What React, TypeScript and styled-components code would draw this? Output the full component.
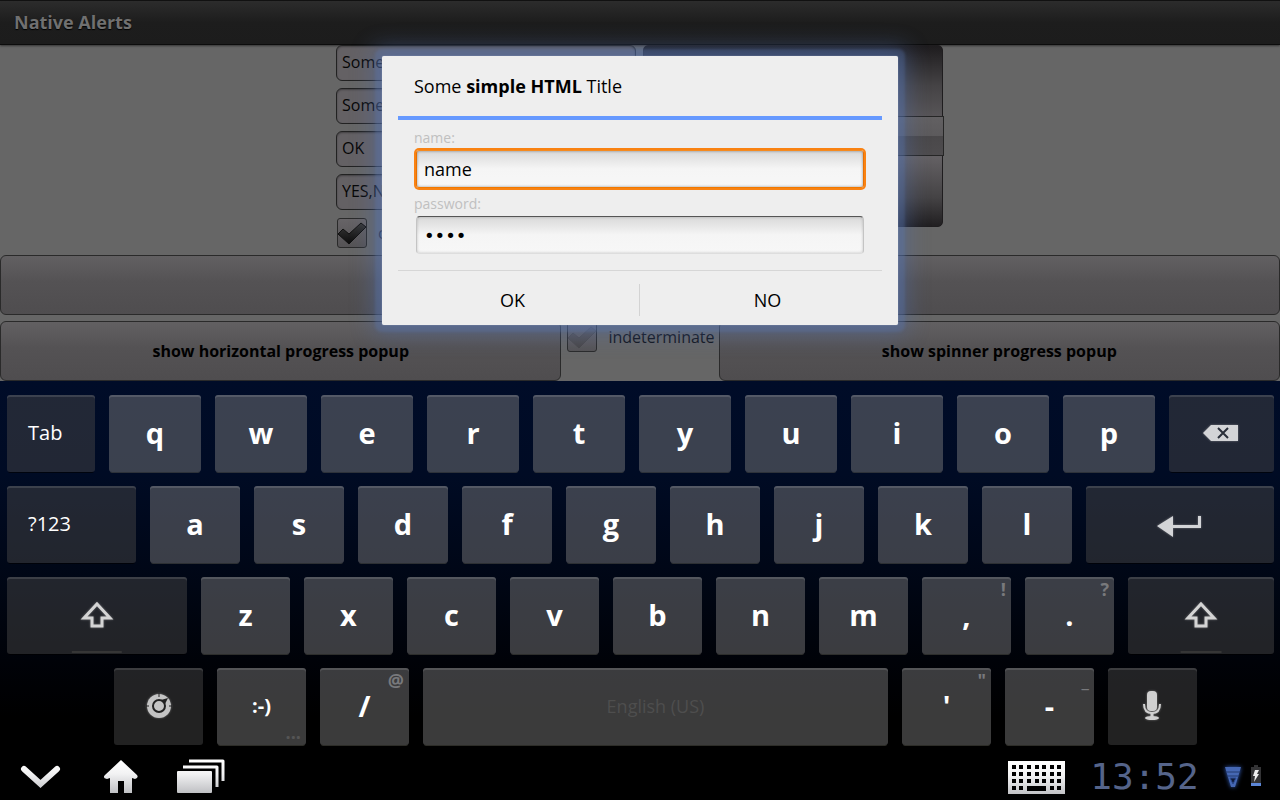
import React from "react";
import styled, { createGlobalStyle, css } from "styled-components";

const GlobalStyle = createGlobalStyle`
  *, *::before, *::after { box-sizing: border-box; }
  body {
    margin: 0;
    background: #000;
    font-family: "Open Sans", "Noto Sans", sans-serif;
  }
  button, input { font-family: inherit; margin: 0; }
  button { cursor: pointer; }
`;

const Screen = styled.div`
  display: flex;
  flex-direction: column;
  min-height: 100vh;
`;

/* ---------- application behind the dialog ---------- */

const AppArea = styled.div`
  position: relative;
  flex: 1;
  display: flex;
  flex-direction: column;
  background: #666;
`;

const TitleBar = styled.header`
  display: flex;
  align-items: center;
  height: 45px;
  padding: 0 14px 2px;
  background: linear-gradient(#2c2c2c, #1d1d1d 50%, #1c1c1c);
  border-top: 1px solid #111;
  border-bottom: 1px solid #0c0c0c;
  box-shadow: 0 1px 2px rgba(0, 0, 0, 0.5);
`;

const AppTitle = styled.h1`
  margin: 0;
  font-size: 18px;
  line-height: 24px;
  font-weight: 700;
  color: #707070;
  text-shadow: 0 1px 1px #000;
`;

const Settings = styled.form`
  display: flex;
  justify-content: center;
  gap: 7px;
  padding: 0 1px 7px 0;
`;

const FieldColumn = styled.div`
  display: flex;
  flex-direction: column;
  gap: 7px;
  width: 300px;
`;

const Field = styled.input`
  width: 100%;
  height: 36px;
  padding: 0 5px 2px;
  font-size: 16px;
  color: #060606;
  background: #646164;
  border: 1px solid #222;
  border-radius: 6px;
  box-shadow: inset 0 1px 2px rgba(0, 0, 0, 0.35);
`;

const Picker = styled.div`
  display: flex;
  flex-direction: column;
  justify-content: center;
  align-self: flex-start;
  width: 300px;
  height: 182px;
  border: 1px solid #1f1d1f;
  border-radius: 5px;
  background: linear-gradient(#1e1c1e, #454345 22%, #636063 50%, #636063 62%, #454345 84%, #211f21);
`;

const PickerBand = styled.div`
  height: 40px;
  margin-right: -2px;
  border: 1px solid #262626;
  background: linear-gradient(#626062, #5c5a5c 50%, #4a484a 51%, #4e4c4e);
`;

const CheckLabel = styled.label`
  display: flex;
  align-items: center;
  gap: 11px;
  height: 31px;
  padding: 1px 1px 0;
  font-size: 16px;
  color: #10131a;
`;

const BoxCell = styled.span`
  display: grid;
  & > * { grid-area: 1 / 1; }
`;

const Box = styled.input`
  appearance: none;
  width: 30px;
  height: 30px;
  border: 1px solid #2a2a2a;
  border-radius: 3px;
  background: linear-gradient(#676467, #555355);
`;

const Tick = styled.svg<{ $faint?: boolean }>`
  width: 30px;
  height: 30px;
  pointer-events: none;
  opacity: ${(p) => (p.$faint ? 0.2 : 1)};
`;

const Actions = styled.div`
  display: flex;
  flex-direction: column;
  gap: 6px;
`;

const ActionRow = styled.div`
  display: flex;
  align-items: flex-start;
`;

const ActionButton = styled.button`
  flex: 1;
  height: 60px;
  font-size: 16px;
  font-weight: 700;
  color: #000;
  background: linear-gradient(#626062, #545254 45%, #4f4d4f);
  border: 1px solid #2a2a2a;
  border-radius: 6px;
`;

const Middle = styled.div`
  padding: 0 3px 0 5px;
`;

/* ---------- dialog ---------- */

const Overlay = styled.div`
  position: absolute;
  inset: 0;
  display: flex;
  align-items: center;
  justify-content: center;
`;

const Dialog = styled.section`
  width: 516px;
  max-width: 100%;
  padding: 0 16px;
  background: #eee;
  border-radius: 2px;
  box-shadow:
    0 0 1px 0 rgba(190, 205, 230, 0.9),
    0 0 3px 7px rgba(90, 120, 180, 0.3),
    0 0 22px 9px rgba(80, 110, 175, 0.45);
`;

const DialogTitle = styled.h2`
  display: flex;
  align-items: center;
  height: 64px;
  margin: 0;
  padding: 0 16px;
  font-size: 18px;
  font-weight: 400;
  color: #000;
  border-bottom: 4px solid #69f;
`;

const DialogBody = styled.div`
  display: flex;
  flex-direction: column;
  gap: 8px;
  padding: 10px 16px 16px;
  border-bottom: 1px solid #d6d6d6;
`;

const Entry = styled.label`
  display: flex;
  flex-direction: column;
  gap: 4px;
  font-size: 14px;
  line-height: 16px;
  color: #c0c0c0;
`;

const EntryInput = styled.input<{ $active?: boolean }>`
  height: 38px;
  margin: 0 2px;
  padding: 0 7px;
  font-size: 18px;
  color: #000;
  border: 1px solid #c4c4c4;
  border-top-color: #555;
  border-bottom-color: #ddd;
  border-radius: 4px;
  outline: none;
  background: linear-gradient(#d9d9d9, #f5f5f5 50%, #f7f7f7);
  box-shadow: inset 0 0 3px rgba(0, 0, 0, 0.2);
  &[type="password"] { font-family: "DejaVu Sans", sans-serif; }
  ${(p) =>
    p.$active &&
    css`
      padding: 0 7px;
      border: 1px solid;
      border-color: #f58a20 #e87000 #f07800;
      border-radius: 3px;
      box-shadow: 0 0 0 2px #f98212, inset 0 0 3px rgba(0, 0, 0, 0.4);
    `}
`;

const DialogButtons = styled.div`
  display: flex;
  padding: 13px 0 9px;
`;

const DialogButton = styled.button`
  flex: 1;
  height: 32px;
  padding: 0 12px 0 0;
  font-size: 18px;
  color: #000;
  background: none;
  border: 0;
  & + & {
    padding: 0 0 0 13px;
    border-left: 1px solid #d3d3d3;
  }
`;

/* ---------- keyboard ---------- */

const Keyboard = styled.div`
  display: flex;
  flex-direction: column;
  gap: 14px;
  padding: 14px 6px 9px 7px;
  background: linear-gradient(#000c28, #000b24 25%, #000717 50%, #000208 75%, #000 90%);
`;

const KeyRow = styled.div<{ $inset?: boolean }>`
  display: flex;
  gap: 14px;
  padding: ${(p) => (p.$inset ? "0 77px 0 107px" : "0")};
`;

const KeyCap = styled.button<{ $grow: number; $fn?: boolean; $left?: boolean; $size?: number }>`
  position: relative;
  flex: ${(p) => p.$grow} 1 0;
  min-width: 0;
  height: 77px;
  display: flex;
  align-items: center;
  justify-content: ${(p) => (p.$left ? "flex-start" : "center")};
  padding: 0 0 2px;
  border: 0;
  border-radius: 3px;
  color: #fff;
  font-size: ${(p) => p.$size ?? 29}px;
  font-weight: ${(p) => (p.$fn ? 400 : 700)};
  background: ${(p) => (p.$fn ? "rgba(72, 72, 72, 0.47)" : "rgba(131, 131, 131, 0.45)")};
  box-shadow:
    inset 0 2px 0 ${(p) => (p.$fn ? "rgba(255, 255, 255, 0.12)" : "rgba(255, 255, 255, 0.13)")},
    0 2px 0 -1px ${(p) => (p.$fn ? "rgba(0, 0, 0, 0.6)" : "rgba(90, 90, 80, 0.5)")};
`;

const Legend = styled.span`
  margin-left: 21px;
`;

const SpaceLabel = styled.span`
  font-size: 18px;
  font-weight: 400;
  color: #4e4e4e;
`;

const Hint = styled.span<{ $bottom?: boolean }>`
  position: absolute;
  right: 5px;
  ${(p) => (p.$bottom ? "bottom: 2px;" : "top: 1px;")}
  font-size: 18px;
  line-height: 22px;
  font-weight: 700;
  color: ${(p) => (p.$bottom ? "#555" : "#78797c")};
`;

const ShiftLight = styled.span`
  position: absolute;
  bottom: 1px;
  left: 50%;
  width: 28%;
  height: 2px;
  transform: translateX(-50%);
  background: #363636;
`;

const Glyph = styled.svg`
  display: block;
  overflow: visible;
  filter: drop-shadow(0 0 1px rgba(255, 255, 255, 0.35));
`;

/* ---------- system bar ---------- */

const SystemBar = styled.footer`
  display: flex;
  align-items: center;
  justify-content: space-between;
  height: 46px;
  padding: 0 16px 0 20px;
  background: #000;
`;

const NavGroup = styled.nav`
  display: flex;
  align-items: center;
  gap: 40px;
`;

const NavButton = styled.button`
  display: flex;
  padding: 0;
  background: none;
  border: 0;
`;

const Status = styled.div`
  display: flex;
  align-items: center;
  gap: 12px;
`;

const Clock = styled.time`
  width: 135px;
  text-align: center;
  font-family: "DejaVu Sans Mono", monospace;
  font-size: 36px;
  line-height: 40px;
  font-weight: 400;
  color: #55648a;
`;

const ShiftIcon = () => (
  <Glyph width="34" height="28" viewBox="0 0 34 28" aria-hidden="true">
    <path d="M17 3 L30 17 H22 V25 H12 V17 H4 Z" fill="none" stroke="#d4d4d4" strokeWidth="3" />
  </Glyph>
);

const CheckBox = ({ label, checked, faint }: { label: string; checked?: boolean; faint?: boolean }) => (
  <CheckLabel>
    <BoxCell>
      <Box type="checkbox" defaultChecked={checked} />
      <Tick viewBox="0 0 30 30" $faint={faint} aria-hidden="true">
        <defs>
          <linearGradient id="tickFill" x1="0" y1="0" x2="0" y2="1">
            <stop offset="0" stopColor="#3a3a3a" />
            <stop offset="1" stopColor="#0c0c0c" />
          </linearGradient>
        </defs>
        <path d="M1 16 L6 11 L12 16 L24 5 L29 9 L12 26 Z" fill="url(#tickFill)" stroke="#111" strokeWidth="1" />
      </Tick>
    </BoxCell>
    {label}
  </CheckLabel>
);

const Letters = ({ letters, grow }: { letters: string; grow: number }) => (
  <>
    {letters.split("").map((l) => (
      <KeyCap key={l} $grow={grow}>{l}</KeyCap>
    ))}
  </>
);

export default function App() {
  return (
    <Screen>
      <GlobalStyle />
      <AppArea>
        <TitleBar>
          <AppTitle>Native Alerts</AppTitle>
        </TitleBar>
        <Settings>
          <FieldColumn>
            <Field aria-label="Title" defaultValue="Some simple HTML Title" />
            <Field aria-label="Message" defaultValue="Some simple HTML message" />
            <Field aria-label="Close label" defaultValue="OK" />
            <Field aria-label="Other labels" defaultValue="YES,NO" />
            <CheckBox label="cancelable" checked />
          </FieldColumn>
          <Picker>
            <PickerBand />
          </Picker>
        </Settings>
        <Actions>
          <ActionRow>
            <ActionButton aria-label="show alert" />
          </ActionRow>
          <ActionRow>
            <ActionButton>show horizontal progress popup</ActionButton>
            <Middle>
              <CheckBox label="indeterminate" faint />
            </Middle>
            <ActionButton>show spinner progress popup</ActionButton>
          </ActionRow>
        </Actions>

        <Overlay>
          <Dialog role="dialog" aria-labelledby="dialog-title">
            <DialogTitle id="dialog-title">
              <span>Some <b>simple HTML</b> Title</span>
            </DialogTitle>
            <DialogBody>
              <Entry>
                name:
                <EntryInput $active type="text" defaultValue="name" />
              </Entry>
              <Entry>
                password:
                <EntryInput type="password" defaultValue="pass" />
              </Entry>
            </DialogBody>
            <DialogButtons>
              <DialogButton>OK</DialogButton>
              <DialogButton>NO</DialogButton>
            </DialogButtons>
          </Dialog>
        </Overlay>
      </AppArea>

      <Keyboard>
        <KeyRow>
          <KeyCap $grow={88} $fn $left $size={20}><Legend>Tab</Legend></KeyCap>
          <Letters letters="qwertyuiop" grow={92} />
          <KeyCap $grow={105} $fn aria-label="Backspace">
            <Glyph width="38" height="16" viewBox="0 0 38 16" aria-hidden="true">
              <path d="M0 8 L8 0 H35 V16 H8 Z" fill="#d3d4d7" />
              <path d="M15 3 L25 13 M25 3 L15 13" stroke="#2a2f3a" strokeWidth="2" />
            </Glyph>
          </KeyCap>
        </KeyRow>
        <KeyRow>
          <KeyCap $grow={129} $fn $left $size={20}><Legend>?123</Legend></KeyCap>
          <Letters letters="asdfghjkl" grow={90} />
          <KeyCap $grow={188} $fn aria-label="Enter">
            <Glyph width="46" height="24" viewBox="0 0 46 24" aria-hidden="true">
              <path d="M0 14 L16 4 V13 H41 V4 H44 V16 H16 V25 Z" fill="#d3d4d7" />
            </Glyph>
          </KeyCap>
        </KeyRow>
        <KeyRow>
          <KeyCap $grow={180} $fn aria-label="Shift">
            <ShiftIcon />
            <ShiftLight />
          </KeyCap>
          <Letters letters="zxcvbnm" grow={89} />
          <KeyCap $grow={89}>,<Hint>!</Hint></KeyCap>
          <KeyCap $grow={89}>.<Hint>?</Hint></KeyCap>
          <KeyCap $grow={146} $fn aria-label="Right shift">
            <ShiftIcon />
            <ShiftLight />
          </KeyCap>
        </KeyRow>
        <KeyRow $inset>
          <KeyCap $grow={89} $fn aria-label="Input settings">
            <Glyph width="26" height="26" viewBox="0 0 26 26" aria-hidden="true">
              <circle cx="13" cy="13" r="12" fill="#c4c4c4" />
              <circle cx="13" cy="13" r="6" fill="#c4c4c4" stroke="#222" strokeWidth="2" />
              <path d="M15 7 L22 5 L19 11 Z" fill="#222" />
              <path d="M13 0 V4 M0 13 H3 M23 13 H26" stroke="#222" strokeWidth="1" />
            </Glyph>
          </KeyCap>
          <KeyCap $grow={89} $size={20}>:-)<Hint $bottom>...</Hint></KeyCap>
          <KeyCap $grow={89}>/<Hint>@</Hint></KeyCap>
          <KeyCap $grow={465}><SpaceLabel>English (US)</SpaceLabel></KeyCap>
          <KeyCap $grow={89}>'<Hint>"</Hint></KeyCap>
          <KeyCap $grow={89}>-<Hint>_</Hint></KeyCap>
          <KeyCap $grow={89} $fn aria-label="Voice input">
            <Glyph width="20" height="32" viewBox="0 0 20 32" aria-hidden="true">
              <rect x="4" y="1" width="10" height="20" rx="4" fill="#d0d0d0" />
              <path d="M1 14 C1 20 4 23 9 23 C14 23 17 20 17 14" fill="none" stroke="#d0d0d0" strokeWidth="2" />
              <path d="M9 23 V28" stroke="#d0d0d0" strokeWidth="3" />
              <ellipse cx="9" cy="28" rx="7" ry="2" fill="#d0d0d0" />
            </Glyph>
          </KeyCap>
        </KeyRow>
      </Keyboard>

      <SystemBar>
        <NavGroup>
          <NavButton aria-label="Hide keyboard">
            <svg width="42" height="36" viewBox="0 0 42 36" aria-hidden="true">
              <defs>
                <linearGradient id="silver" gradientUnits="userSpaceOnUse" x1="0" y1="2" x2="0" y2="34">
                  <stop offset="0" stopColor="#fff" />
                  <stop offset="0.4" stopColor="#f2f2f3" />
                  <stop offset="1" stopColor="#bfc0c3" />
                </linearGradient>
              </defs>
              <path d="M4 10 L20.500 25 L37 10" fill="none" stroke="url(#silver)" strokeWidth="6" strokeLinecap="round" />
            </svg>
          </NavButton>
          <NavButton aria-label="Home">
            <svg width="36" height="36" viewBox="0 0 36 36" aria-hidden="true">
              <path d="M19 1 L35 16 Q37 19 33 20 L30 19 V34 H22 V22 H16 V34 H8 V19 L5 20 Q0 19 3 16 Z" fill="url(#silver)" />
            </svg>
          </NavButton>
          <NavButton aria-label="Recent apps">
            <svg width="48" height="36" viewBox="1 0 48 36" overflow="visible" aria-hidden="true">
              <rect x="0" y="12" width="35" height="22" rx="1" fill="url(#silver)" />
              <path d="M6 8 H40 V28" fill="none" stroke="url(#silver)" strokeWidth="3" strokeLinejoin="round" />
              <path d="M12 2 H46 V22" fill="none" stroke="url(#silver)" strokeWidth="3" strokeLinejoin="round" />
            </svg>
          </NavButton>
        </NavGroup>
        <Status>
          <NavButton aria-label="Choose keyboard">
            <svg width="57" height="33" viewBox="0 0 57 33" aria-hidden="true">
              <rect width="57" height="33" fill="url(#silver)" />
              {[4, 11, 18].map((y) =>
                [4, 11, 19, 27, 34, 42, 49].map((x) => <rect key={`${x}-${y}`} x={x} y={y} width="4" height="4" fill="#000" />)
              )}
              {[4, 11, 42, 49].map((x) => <rect key={x} x={x} y="25" width="4" height="4" fill="#000" />)}
              <rect x="19" y="25" width="19" height="5" fill="#000" />
            </svg>
          </NavButton>
          <Clock dateTime="13:52">13:52</Clock>
          <svg width="40" height="26" viewBox="0 0 40 26" overflow="visible" aria-hidden="true">
            <g filter="drop-shadow(0 0 2px #3560c0)">
              <path d="M1 3 H17 L11 23 H7 Z" fill="#4668b4" />
              <path d="M2 8 H16 M3 12 H15" stroke="#223a70" strokeWidth="1" />
              <path d="M6 14 H12 L9 20 Z" fill="#101c3c" stroke="#2c4a90" strokeWidth="1" />
            </g>
            <path d="M30 1 H34 V3 H37 V20 H27 V3 H30 Z" fill="#333335" />
            <path d="M31 6 L35 6 L33 10 H35 L30 18 L31 12 H29 Z" fill="#eee" />
            <rect x="27" y="19" width="10" height="3" fill="#5c86d6" />
          </svg>
        </Status>
      </SystemBar>
    </Screen>
  );
}
